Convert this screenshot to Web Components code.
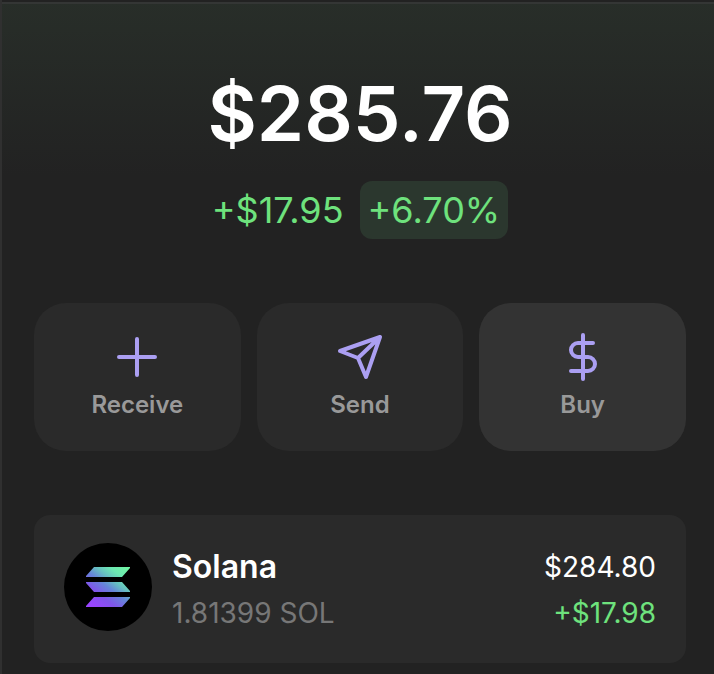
<!DOCTYPE html>
<html lang="en">
<head>
<meta charset="utf-8">
<meta name="viewport" content="width=device-width, initial-scale=1">
<title>Wallet</title>
<style>
  html, body { margin: 0; min-height: 100%; background: #222; }
  body { font-family: Inter, "Liberation Sans", sans-serif; color: #fff; }
</style>
</head>
<body>
<wallet-page>
  <wallet-balance slot="balance">
    $285.76
    <span slot="change">+$17.95</span>
    <span slot="percent">+6.70%</span>
  </wallet-balance>
  <wallet-action slot="actions" icon="plus">Receive</wallet-action>
  <wallet-action slot="actions" icon="send">Send</wallet-action>
  <wallet-action slot="actions" icon="dollar" active>Buy</wallet-action>
  <token-row>
    <solana-logo slot="logo"></solana-logo>
    <span slot="name">Solana</span>
    <span slot="amount">1.81399 SOL</span>
    <span slot="value">$284.80</span>
    <span slot="gain">+$17.98</span>
  </token-row>
</wallet-page>

<script>
class ShadowElement extends HTMLElement {
  connectedCallback() {
    if (!this.shadowRoot) this.attachShadow({ mode: "open" }).innerHTML = this.render();
  }
}

customElements.define("wallet-page", class extends ShadowElement {
  render() {
    return `<style>
      :host { display: block; min-height: 100vh; box-sizing: border-box; border-left: 2px solid #303030;
        background: linear-gradient(#282e29, #222 176px) #222; }
      .top { height: 2px; background: #222; border-bottom: 2px solid #343635; }
      main { padding: 64px 28px 12px 32px; }
      nav { display: grid; grid-template-columns: repeat(3, 1fr); gap: 16px; margin: 64px 0; }
    </style>
    <div class="top"></div>
    <main>
      <slot name="balance"></slot>
      <nav aria-label="Actions"><slot name="actions"></slot></nav>
      <slot></slot>
    </main>`;
  }
});

customElements.define("wallet-balance", class extends ShadowElement {
  render() {
    return `<style>
      :host { display: block; text-align: center; }
      h1 { margin: 0 0 23px; font-size: 76px; line-height: 90px; font-weight: 600; }
      .change { display: flex; justify-content: center; align-items: center; gap: 16px;
        font-size: 36px; line-height: 58px; color: #6ee27d; }
      .badge { background: #2b372e; border-radius: 12px; padding: 0 8px; }
    </style>
    <h1><slot></slot></h1>
    <div class="change">
      <slot name="change"></slot>
      <span class="badge"><slot name="percent"></slot></span>
    </div>`;
  }
});

const ICONS = {
  plus: '<path d="M24 6V42M6 24H42"/>',
  send: '<path d="M44 4L4 18L22 25L30 44ZM22 25L44 4"/>',
  dollar: '<path d="M24 2V46M34 10H19A7 7 0 0 0 19 24H29A7 7 0 0 1 29 38H12"/>'
};

customElements.define("wallet-action", class extends ShadowElement {
  render() {
    return `<style>
      :host { display: block; }
      button { display: flex; flex-direction: column; align-items: center; gap: 8px; width: 100%;
        margin: 0; padding: 30px 16px; border: 0; border-radius: 32px; background: #2a2a2a;
        color: #999; font: inherit; font-size: 24px; line-height: 32px; font-weight: 600; cursor: pointer; }
      :host([active]) button, button:hover { background: #333; }
      svg { display: block; width: 48px; height: 48px; fill: none; stroke: #ab9ff2; stroke-width: 4;
        stroke-linecap: round; stroke-linejoin: round; }
    </style>
    <button type="button">
      <svg viewBox="0 0 48 48" aria-hidden="true">${ICONS[this.getAttribute("icon")]}</svg>
      <span><slot></slot></span>
    </button>`;
  }
});

customElements.define("solana-logo", class extends ShadowElement {
  render() {
    return `<style>
      :host { display: block; flex: none; width: 88px; height: 88px; border-radius: 50%; background: #000; }
      svg { display: block; }
    </style>
    <svg viewBox="0 0 88 88" role="img" aria-label="Solana logo">
      <defs><linearGradient id="g" gradientUnits="userSpaceOnUse" x1="27" y1="66" x2="61" y2="22">
        <stop offset=".08" stop-color="#9945ff"/><stop offset=".3" stop-color="#8055ea"/>
        <stop offset=".5" stop-color="#6585d8"/><stop offset=".65" stop-color="#66bfc0"/>
        <stop offset=".8" stop-color="#6ce8b2"/><stop offset="1" stop-color="#72f5a4"/>
      </linearGradient></defs>
      <path fill="url(#g)" d="M30 24H66V25L58 34H22V33ZM22 39H58L66 48V49H30L22 40ZM30 54H66V55L58 64H22V63Z"/>
    </svg>`;
  }
});

customElements.define("token-row", class extends ShadowElement {
  render() {
    return `<style>
      :host { display: flex; align-items: flex-start; gap: 20px; padding: 28px 30px 27px; border-radius: 16px;
        background: #2a2a2a; font-size: 28px; line-height: 46px; }
      .text { flex: 1; min-width: 0; padding-top: 1px; display: grid; grid-template-columns: 1fr auto; align-items: center; }
      .name { font-size: 32px; font-weight: 600; }
      .amount { color: #777; }
      .value, .gain { text-align: right; }
      .gain { color: #6ee27d; }
    </style>
    <slot name="logo"></slot>
    <div class="text">
      <div class="name"><slot name="name"></slot></div>
      <div class="value"><slot name="value"></slot></div>
      <div class="amount"><slot name="amount"></slot></div>
      <div class="gain"><slot name="gain"></slot></div>
    </div>`;
  }
});
</script>
</body>
</html>
